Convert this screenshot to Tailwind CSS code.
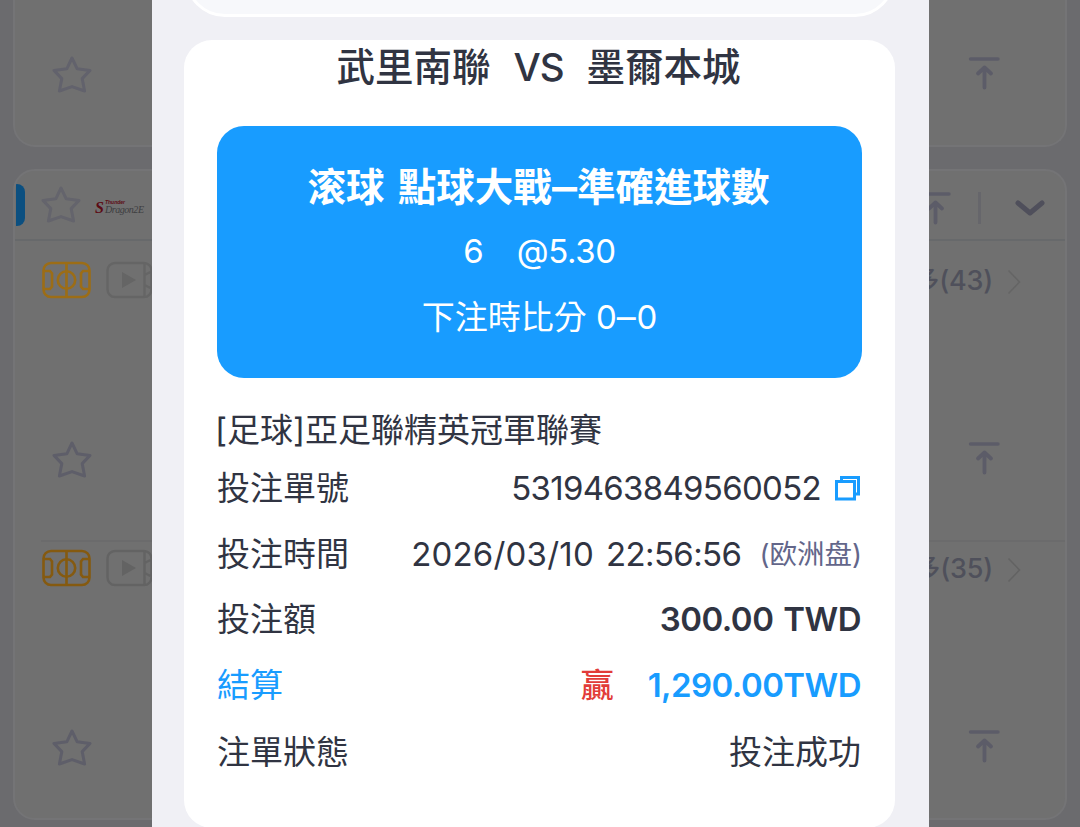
<!DOCTYPE html>
<html lang="zh-Hant">
<head>
  <meta charset="UTF-8" />
  <meta name="viewport" content="width=device-width, initial-scale=1.0" />
  <title>注單詳情</title>
  <script src="https://cdn.jsdelivr.net/npm/@tailwindcss/browser@4"></script>
</head>
<body class="relative h-[827px] overflow-hidden bg-[#6b6b6e] font-['Inter','Noto_Sans_CJK_TC',sans-serif] text-[#303442]">

  <!-- shared icons -->
  <svg class="hidden">
    <symbol id="star" viewBox="0 0 42 42">
      <path d="M21 4 L26.2 14.8 L39 16.4 L31.2 24.6 L33.6 37 L21 32.6 L8.4 37 L10.8 24.6 L3 16.4 L15.8 14.8 Z" fill="none" stroke="currentColor" stroke-width="3" stroke-linejoin="round" />
    </symbol>
    <symbol id="top" viewBox="0 0 32 34">
      <path d="M2.5 3 H30" fill="none" stroke="currentColor" stroke-width="3.4" stroke-linecap="round" />
      <path d="M16.5 31.5 V11.5 M10 17.5 L16.5 11.5 L23 17.5" fill="none" stroke="currentColor" stroke-width="3.8" stroke-linecap="round" stroke-linejoin="round" />
    </symbol>
    <symbol id="pitch" viewBox="0 0 50 38">
      <g fill="none" stroke="currentColor" stroke-width="2.6">
        <rect x="2.5" y="2" width="46" height="34" rx="7.5" />
        <path d="M25.5 2 V36" />
        <circle cx="25.5" cy="19" r="8.7" />
        <path d="M2.5 10 H9 L11 12.5 V25.5 L9 28 H2.5 M48.5 10 H42 L40 12.5 V25.5 L42 28 H48.5" />
      </g>
    </symbol>
    <symbol id="video" viewBox="0 0 50 38">
      <rect x="2.5" y="2" width="44" height="34" rx="7.5" fill="none" stroke="currentColor" stroke-width="2.4" />
      <path d="M39.5 2 V36 M39.5 14 L45.5 11 M39.5 24 L45.5 27" fill="none" stroke="currentColor" stroke-width="2.4" />
      <path d="M17 11 L31 19 L17 27 Z" fill="currentColor" />
    </symbol>
    <symbol id="more" viewBox="0 0 14 26">
      <path d="M1.5 1.5 L12.5 13 L1.5 24.5" fill="none" stroke="currentColor" stroke-width="1.6" />
    </symbol>
  </svg>

  <!-- dimmed match list -->
  <div class="flex flex-col gap-[22px] px-[13px]">
    <section class="flex h-[147px] items-start justify-between rounded-b-[22px] border-2 border-t-0 border-[#747476] bg-[#707070] pr-[65px] pl-[36px] text-[#62626c]">
      <svg class="mt-[54px] size-[42px]"><use href="#star" /></svg>
      <svg class="mt-[56px] h-[34px] w-8 text-[#5c5c68]"><use href="#top" /></svg>
    </section>

    <section class="h-[651px] overflow-hidden rounded-[22px] border-2 border-[#747476] bg-[#707070]">
      <header class="flex h-[70px] items-center border-b-2 border-[#67696b] pr-[19px] text-[#64646c]">
        <span class="ml-px h-[42px] w-[9px] rounded-r-lg bg-[#0b4f80]"></span>
        <svg class="ml-[15px] size-[42px]"><use href="#star" /></svg>
        <svg class="ml-[11px] mt-[5px] h-[18px] w-[54px]" viewBox="0 -2 54 18">
          <text x="2" y="12" font-family="Liberation Serif" font-size="16" font-weight="bold" font-style="italic" fill="#5c0b14">S</text>
          <text x="12" y="3" font-family="Liberation Sans" font-size="5" font-weight="bold" font-style="italic" fill="#5c0b14">Thunder</text>
          <text x="12" y="11.5" font-family="Liberation Serif" font-size="10" font-style="italic" textLength="39" fill="#3d3d40">Dragon2E</text>
        </svg>
        <svg class="mt-[6px] ml-auto h-[34px] w-8 text-[#5c5c68]"><use href="#top" /></svg>
        <span class="mt-[6px] ml-[27px] h-8 w-[3px] bg-[#66666b]"></span>
        <svg class="mt-[8px] ml-[33px] h-5 w-[32px] text-[#4f4f5b]" viewBox="0 0 32 20"><path d="M4 4 L16 14 L28 4" fill="none" stroke="currentColor" stroke-width="5" stroke-linecap="round" stroke-linejoin="round" /></svg>
      </header>

      <div class="h-[299px] pr-[44px] pl-[26px]">
        <div class="flex h-[78px] items-center text-[#656565]">
          <svg class="h-[38px] w-[50px] text-[#9c6d16]"><use href="#pitch" /></svg>
          <svg class="ml-[14px] h-[38px] w-[50px]"><use href="#video" /></svg>
          <span class="mt-[2px] ml-auto text-[27px] font-medium tracking-[-0.2px] text-[#4f505b]">更多(43)</span>
          <svg class="mt-[4px] ml-[14px] h-[26px] w-[14px]"><use href="#more" /></svg>
        </div>
        <div class="mt-[120px] flex items-start justify-between pr-[21px] pl-[10px] text-[#5e5e69]">
          <svg class="size-[42px]"><use href="#star" /></svg>
          <svg class="mt-[2px] h-[34px] w-8 text-[#5c5c68]"><use href="#top" /></svg>
        </div>
      </div>

      <div class="ml-[26px] border-t-2 border-[#6b6b6c] pr-[44px]">
        <div class="flex h-[52px] items-center text-[#636363]">
          <svg class="h-[38px] w-[50px] text-[#855a10]"><use href="#pitch" /></svg>
          <svg class="ml-[14px] h-[38px] w-[50px]"><use href="#video" /></svg>
          <span class="mt-[3px] ml-auto text-[27px] font-medium tracking-[-0.2px] text-[#4f505b]">更多(35)</span>
          <svg class="mt-[4px] ml-[14px] h-[26px] w-[14px]"><use href="#more" /></svg>
        </div>
        <div class="mt-[133px] flex items-start justify-between pr-[21px] pl-[10px] text-[#5e5e69]">
          <svg class="size-[42px]"><use href="#star" /></svg>
          <svg class="mt-[2px] h-[34px] w-8 text-[#5c5c68]"><use href="#top" /></svg>
        </div>
      </div>
    </section>
  </div>

  <!-- bet slip dialog -->
  <main class="absolute inset-y-0 left-[152px] w-[777px] bg-[#f0f0f5] px-8">
    <div class="h-[17px] overflow-hidden">
      <div class="-mt-[63px] ml-px h-20 w-[710px] rounded-[42px] border-3 border-white bg-[#f7f8fb]"></div>
    </div>

    <section class="mt-[23px] h-[788px] w-[711px] rounded-[28px] bg-white px-[33px]">
      <h1 class="flex h-[86px] justify-center gap-[23px] pr-[2px] text-[38.5px] leading-[55px] font-medium whitespace-nowrap">
        <span>武里南聯</span><span class="tracking-[-1px]">VS</span><span>墨爾本城</span>
      </h1>

      <div class="flex h-[252px] w-[645px] flex-col items-center rounded-[27px] bg-[#189cff] pt-[29px] text-[33px] whitespace-nowrap text-white">
        <h2 class="h-[64px] pr-[2px] text-[38.5px] leading-[64px] font-bold [word-spacing:4px]">滚球 點球大戰<span class="mx-[3px] inline-block scale-x-130">–</span>準確進球數</h2>
        <p class="flex h-[66px] gap-[33px] leading-[64px]"><span>6</span><span class="tracking-[-0.4px]">@5.30</span></p>
        <p class="h-[66px] leading-[64px]">下注時比分 0<span class="mx-[1.5px] inline-block scale-x-115">–</span>0</p>
      </div>

      <p class="mt-[23px] -ml-[2px] h-[54px] text-[33px] leading-[58px] whitespace-nowrap">[足球]亞足聯精英冠軍聯賽</p>

      <dl class="w-[644px] text-[33px] leading-[66px] whitespace-nowrap">
        <div class="flex h-[66px] justify-between">
          <dt>投注單號</dt>
          <dd class="flex items-center"><span class="tracking-[-0.7px]">5319463849560052</span>
            <svg class="ml-[14px] h-[26px] w-[26px] text-[#189cff]" viewBox="0 0 26 26" fill="none" stroke="currentColor" stroke-width="3">
              <path d="M1.5 6.5 H19.5 V24 H1.5 Z" />
              <path d="M6.5 6.5 V2.5 H23.5 V19 H19.5" />
            </svg>
          </dd>
        </div>
        <div class="flex h-[66px] justify-between">
          <dt>投注時間</dt>
          <dd class="-mr-px flex"><span class="tracking-[0.2px]">2026/03/10</span><span class="ml-[12px] tracking-[-0.6px]">22:56:56</span><span class="ml-[18px] text-[27.5px] leading-[62px] text-[#63668a]">(<span lang="zh-Hans" class="font-['Noto_Sans_CJK_SC',sans-serif]">欧洲盘</span>)</span></dd>
        </div>
        <div class="flex h-[66px] justify-between leading-[65px]">
          <dt>投注額</dt>
          <dd class="font-semibold tracking-[-0.5px] [word-spacing:2px]">300.00 TWD</dd>
        </div>
        <div class="flex h-[66px] justify-between leading-[65px] text-[#189cff]">
          <dt>結算</dt>
          <dd class="flex font-semibold"><span class="mr-[34px] font-medium text-[#e23c39]">贏</span><span class="tracking-[-0.55px]">1,290.00TWD</span></dd>
        </div>
        <div class="flex h-[66px] justify-between">
          <dt>注單狀態</dt>
          <dd>投注成功</dd>
        </div>
      </dl>
    </section>
  </main>

</body>
</html>
